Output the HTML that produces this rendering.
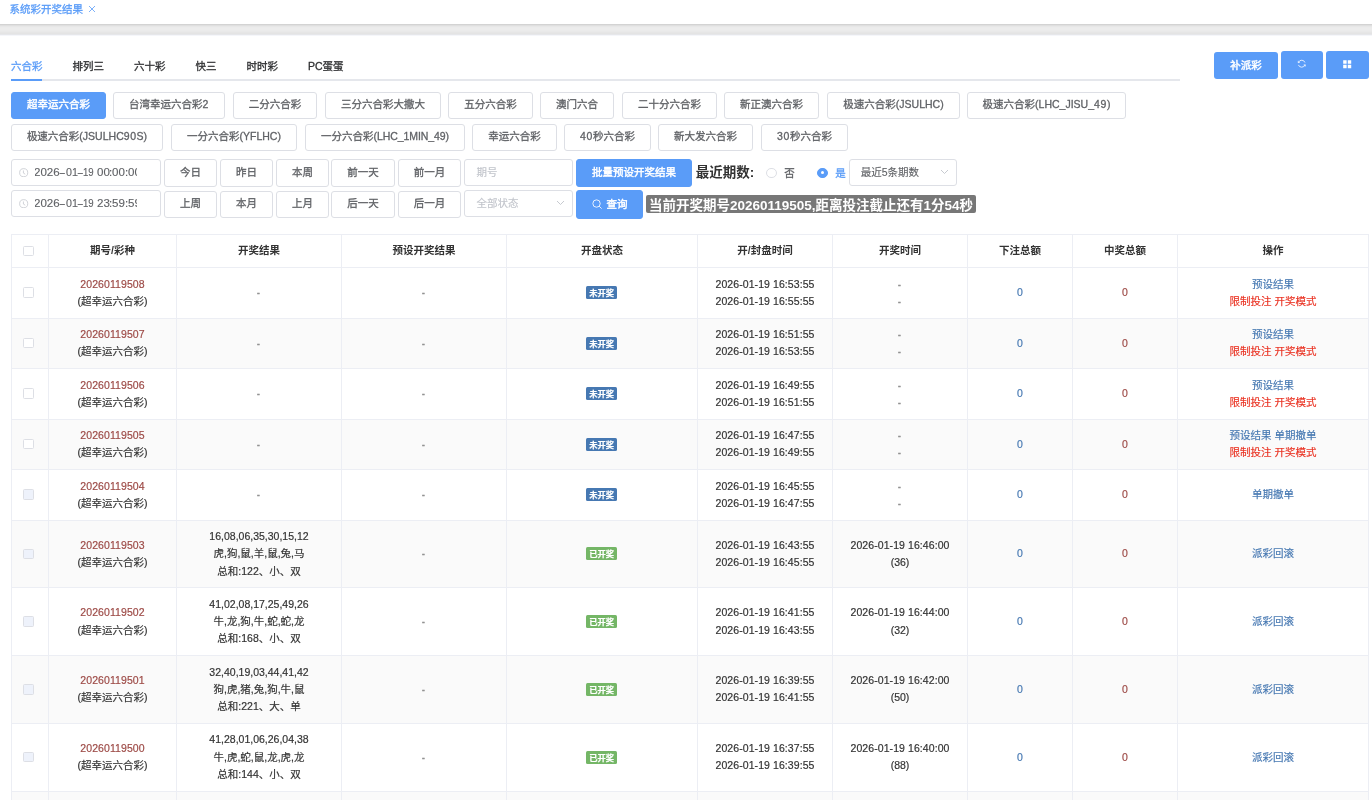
<!DOCTYPE html>
<html>
<head>
<meta charset="utf-8">
<title>系统彩开奖结果</title>
<style>
*{box-sizing:border-box}
html,body{margin:0;padding:0}
body{width:1372px;height:800px;overflow:hidden;background:#fff;position:relative;
 font-family:"Liberation Sans","Noto Sans CJK SC",sans-serif;font-size:10.5px;color:#333}
#app{position:relative;width:1372px;height:800px;overflow:hidden;background:#fff;will-change:transform}
.abs{position:absolute}
/* top tag bar */
#tagbar{left:0;top:0;width:1372px;height:24px;background:#fff}
#tagbar .t{position:absolute;left:9.6px;top:0;height:19px;line-height:19px;font-size:10.5px;color:#5a9cf8;white-space:nowrap;-webkit-text-stroke:.3px currentColor}
#tagbar .x{position:absolute;left:88.2px;top:5.2px}
#band{left:0;top:24px;width:1372px;height:12px;background:linear-gradient(#d3d3d3 0px,#d3d3d3 1px,#dfdfdf 1px,#dfdfdf 2px,#e7e7e7 2px,#e7e7e7 3px,#ebebeb 3px,#ebebeb 4px,#ececec 4px,#ececec 5px,#ececec 5px,#ececec 6px,#ebebeb 6px,#ebebeb 7px,#e9e9e9 7px,#e9e9e9 8px,#e6e6e6 8px,#e6e6e6 9px,#e4e4e4 9px,#e4e4e4 10px,#e6e7ea 10px,#e6e7ea 11px,#f5f6fa 11px,#f5f6fa 12px)}
/* tabs */
#tabs{left:11px;top:51px;width:1169px;height:30px}
#tabs .line{position:absolute;left:0;right:0;top:28px;height:2px;background:#e5e7ec}
#tabs .bar{position:absolute;left:0;top:28px;width:31px;height:2px;background:#5a9cf8}
#tabs .it{display:inline-block;height:30px;line-height:30px;padding:0 15px;font-size:10.5px;font-weight:400;-webkit-text-stroke:.3px currentColor;color:#303133;vertical-align:top}
#tabs .it.first{padding-left:0}
#tabs .it.on{color:#5a9cf8}
#lot1 .btn,#lot2 </style>
</head>
<body>
<div id="app">
<div id="tagbar" class="abs"><span class="t">系统彩开奖结果</span><svg class="x" width="8" height="8" viewBox="0 0 8 8"><path d="M1 1L7 7M7 1L1 7" stroke="#5a9cf8" stroke-width="0.8" fill="none"/></svg></div>
<div id="band" class="abs"></div>
<div id="tabs" class="abs"><div class="line"></div><div class="bar"></div><span class="it on first">六合彩</span><span class="it">排列三</span><span class="it">六十彩</span><span class="it">快三</span><span class="it">时时彩</span><span class="it">PC蛋蛋</span></div>
<style>
.rb{position:absolute;background:#5a9cf8;border-radius:3px;color:#fff;font-size:10.5px;font-weight:400;-webkit-text-stroke:.45px currentColor;text-align:center;white-space:nowrap}
.rb svg{position:absolute}
</style>
<div class="rb" style="left:1214px;top:52px;width:64px;height:27px;line-height:27px">补派彩</div>
<div class="rb" style="left:1281px;top:51px;width:42px;height:28px"><svg width="9.4" height="9.4" viewBox="0 0 10 10" style="left:15.9px;top:8.3px;transform:scaleX(-1)"><path d="M1.52 3.73A3.7 3.7 0 0 1 8.35 3.44M8.48 6.27A3.7 3.7 0 0 1 1.65 6.56" fill="none" stroke="#fff" stroke-width="0.85"/><path d="M8.65 1.94l0.3 1.9l-1.9 -0.2M1.35 8.06l-0.3 -1.9l1.9 0.2" fill="none" stroke="#fff" stroke-width="0.8"/></svg></div>
<div class="rb" style="left:1326px;top:51px;width:43px;height:28px"><svg width="8.6" height="8.6" viewBox="0 0 9 9" style="left:17.1px;top:9px"><path d="M0.2 0.2h3.6v3.6h-3.6zM5 0.2h3.6v3.6h-3.6zM0.2 5h3.6v3.6h-3.6zM5 5h3.6v3.6h-3.6z" fill="#fff"/></svg></div>
<style>
.box{position:absolute;border:1px solid #dddfe5;border-radius:3px;background:#fff;color:#606266;font-size:10.5px;font-weight:400;-webkit-text-stroke:.3px currentColor;white-space:nowrap;text-align:center;overflow:hidden}
.box.pri{background:#5a9cf8;border-color:#5a9cf8;color:#fff;-webkit-text-stroke:.45px currentColor}
.box.in{text-align:left;font-weight:400;-webkit-text-stroke:.12px currentColor}
.box .ph{position:absolute;left:11.5px;top:0;color:#c1c4cb}
.box .dt{position:absolute;left:22.5px;top:0;width:102.5px;height:25px;overflow:hidden;color:#606266}
.box .dt b{position:absolute;top:0;font-weight:400;transform-origin:0 50%;transform:scaleX(1.1)}
.box .dt b.h{transform:scaleX(1.9)}
.box .dt b.w{transform:scaleX(1.02)}
.box .dt b.n{transform:scaleX(.92)}
.box svg{position:absolute}
.lbl16{position:absolute;font-size:13.5px;font-weight:700;color:#333;white-space:nowrap}
.rad{position:absolute;width:10.5px;height:10.5px;border-radius:50%;border:1px solid #dddfe5;background:#fff}
.rad.on{border-color:#5a9cf8;background:#5a9cf8}
.rad.on:after{content:"";position:absolute;left:50%;top:50%;width:3px;height:3px;margin:-1.5px 0 0 -1.5px;border-radius:50%;background:#fff}
.rl{position:absolute;font-size:10.5px;font-weight:400;-webkit-text-stroke:.3px currentColor;color:#606266;white-space:nowrap}
.tag0{position:absolute;background:#777;color:#fff;font-weight:700;border-radius:3px;white-space:nowrap;text-align:center}
</style>
<div class="box in" style="left:11px;top:159px;width:150px;height:27px;line-height:25px"><svg width="9.4" height="9.4" viewBox="0 0 10 10" style="left:7.2px;top:7.5px"><circle cx="5" cy="5" r="4.3" fill="none" stroke="#c1c4cb" stroke-width="0.8"/><path d="M4.7 2.6V5.4L6.6 6.6" fill="none" stroke="#c1c4cb" stroke-width="0.8"/></svg><span class="dt"><b style="left:-0.5px">2026</b><b class="h" style="left:24.7px">-</b><b class="w" style="left:31.2px">01</b><b class="h" style="left:42.8px">-</b><b class="n" style="left:48.5px">19</b><b style="left:59.5px"> </b><b style="left:62.2px">00</b><b style="left:74.9px">:</b><b style="left:77.6px">00</b><b style="left:90.4px">:</b><b style="left:93.1px">00</b></span></div>
<div class="box " style="left:164px;top:159px;width:53px;height:28px;line-height:24px">今日</div>
<div class="box " style="left:220px;top:159px;width:53px;height:28px;line-height:24px">昨日</div>
<div class="box " style="left:276px;top:159px;width:53px;height:28px;line-height:24px">本周</div>
<div class="box " style="left:331px;top:159px;width:64px;height:28px;line-height:24px">前一天</div>
<div class="box " style="left:398px;top:159px;width:63px;height:28px;line-height:24px">前一月</div>
<div class="box in" style="left:464px;top:159px;width:109px;height:27px;line-height:25px"><span class="ph">期号</span></div>
<div class="box pri" style="left:576px;top:159px;width:116px;height:28px;line-height:25px">批量预设开奖结果</div>
<div class="lbl16" style="left:695.7px;top:164px;line-height:18px">最近期数:</div>
<div class="rad" style="left:766px;top:167.5px"></div><div class="rl" style="left:784.3px;top:164px;line-height:18px">否</div>
<div class="rad on" style="left:817px;top:167.5px"></div><div class="rl" style="left:835.3px;top:164px;line-height:18px;color:#5a9cf8">是</div>
<div class="box in" style="left:849px;top:159px;width:108px;height:27px;line-height:25px"><span class="ph" style="color:#606266;left:10.7px">最近5条期数</span><svg width="9" height="6" viewBox="0 0 9 6" style="left:90.2px;top:8.9px"><path d="M1 1L4.5 4.5L8 1" fill="none" stroke="#c1c4cb" stroke-width="0.9"/></svg></div>
<div class="box in" style="left:11px;top:190px;width:150px;height:27px;line-height:25px"><svg width="9.4" height="9.4" viewBox="0 0 10 10" style="left:7.2px;top:7.5px"><circle cx="5" cy="5" r="4.3" fill="none" stroke="#c1c4cb" stroke-width="0.8"/><path d="M4.7 2.6V5.4L6.6 6.6" fill="none" stroke="#c1c4cb" stroke-width="0.8"/></svg><span class="dt"><b style="left:-0.5px">2026</b><b class="h" style="left:24.7px">-</b><b class="w" style="left:31.2px">01</b><b class="h" style="left:42.8px">-</b><b class="n" style="left:48.5px">19</b><b style="left:59.5px"> </b><b style="left:62.2px">23</b><b style="left:74.9px">:</b><b style="left:77.6px">59</b><b style="left:90.4px">:</b><b style="left:93.1px">59</b></span></div>
<div class="box " style="left:164px;top:191px;width:53px;height:27px;line-height:23.4px">上周</div>
<div class="box " style="left:220px;top:191px;width:53px;height:27px;line-height:23.4px">本月</div>
<div class="box " style="left:276px;top:191px;width:53px;height:27px;line-height:23.4px">上月</div>
<div class="box " style="left:331px;top:191px;width:64px;height:27px;line-height:23.4px">后一天</div>
<div class="box " style="left:398px;top:191px;width:63px;height:27px;line-height:23.4px">后一月</div>
<div class="box in" style="left:464px;top:190px;width:109px;height:27px;line-height:25px"><span class="ph">全部状态</span><svg width="9" height="6" viewBox="0 0 9 6" style="left:90.7px;top:8.9px"><path d="M1 1L4.5 4.5L8 1" fill="none" stroke="#c1c4cb" stroke-width="0.9"/></svg></div>
<div class="box pri" style="left:576px;top:190px;width:67px;height:29px;line-height:27px"><svg width="10.4" height="10.4" viewBox="0 0 11 11" style="left:15px;top:8.3px"><circle cx="4.8" cy="4.8" r="3.9" fill="none" stroke="#fff" stroke-width="0.9"/><path d="M7.6 7.6L10.2 10.2" stroke="#fff" stroke-width="0.9"/></svg><span style="position:absolute;left:29.5px;top:0">查询</span></div>
<div class="tag0" style="left:646px;top:195px;width:330px;height:18px;line-height:21px;font-size:13.5px;overflow:hidden;border-radius:2px">当前开奖期号20260119505,距离投注截止还有1分54秒</div>
<style>.dg{letter-spacing:.6px;margin-right:-.6px;padding-right:.6px}</style>
<div class="box pri" style="left:11px;top:92px;width:95px;height:27px;line-height:23px">超幸运六合彩</div>
<div class="box " style="left:113px;top:92px;width:112px;height:27px;line-height:23px">台湾幸运六合彩<span class="dg">2</span></div>
<div class="box " style="left:233px;top:92px;width:84px;height:27px;line-height:23px">二分六合彩</div>
<div class="box " style="left:325px;top:92px;width:116px;height:27px;line-height:23px">三分六合彩大撒大</div>
<div class="box " style="left:448px;top:92px;width:85px;height:27px;line-height:23px">五分六合彩</div>
<div class="box " style="left:540px;top:92px;width:74px;height:27px;line-height:23px">澳门六合</div>
<div class="box " style="left:622px;top:92px;width:95px;height:27px;line-height:23px">二十分六合彩</div>
<div class="box " style="left:724px;top:92px;width:95px;height:27px;line-height:23px">新正澳六合彩</div>
<div class="box " style="left:827px;top:92px;width:133px;height:27px;line-height:23px">极速六合彩(JSULHC)</div>
<div class="box " style="left:967px;top:92px;width:159px;height:27px;line-height:23px">极速六合彩(LHC_JISU_<span class="dg">49</span>)</div>
<div class="box " style="left:11px;top:124px;width:152px;height:27px;line-height:23px">极速六合彩(JSULHC<span class="dg">90</span>S)</div>
<div class="box " style="left:171px;top:124px;width:126px;height:27px;line-height:23px">一分六合彩(YFLHC)</div>
<div class="box " style="left:305px;top:124px;width:160px;height:27px;line-height:23px">一分六合彩<span style="letter-spacing:-.08px">(LHC_1MIN_49)</span></div>
<div class="box " style="left:472px;top:124px;width:85px;height:27px;line-height:23px">幸运六合彩</div>
<div class="box " style="left:564px;top:124px;width:87px;height:27px;line-height:23px"><span class="dg">40</span>秒六合彩</div>
<div class="box " style="left:658px;top:124px;width:95px;height:27px;line-height:23px">新大发六合彩</div>
<div class="box " style="left:761px;top:124px;width:87px;height:27px;line-height:23px"><span class="dg">30</span>秒六合彩</div>
<style>
#tb{position:absolute;left:11px;top:234px;width:1358px;border-collapse:separate;border-spacing:0;table-layout:fixed;border-left:1px solid #eceef4;border-top:1px solid #eceef4;font-size:10.5px;color:#333}
#tb td,#tb th{border-right:1px solid #eceef4;border-bottom:1px solid #eceef4;padding:0;text-align:center;vertical-align:top;font-weight:400;overflow:hidden;white-space:nowrap}
#tb th{font-weight:700;color:#333}
#tb .l{height:17px;line-height:17px}
#tb .rel{position:relative}
#tb td{-webkit-text-stroke:.18px currentColor}
#tb .n{letter-spacing:.08px}
#tb .hy{display:inline-block;color:#8c8c8c;-webkit-text-stroke:.45px #8c8c8c;transform:translate(-.3px,-.1px) scaleX(.8)}
#tb tr.s td{background:#fafafa}
#tb .p{color:#9d4a46}
#tb .b{color:#4678b2}
#tb .r{color:#ea3323}
.cb{position:absolute;left:11px;width:11px;height:11px;border:1px solid #dddfe5;border-radius:1.5px;background:#fff}
.cb.d{background:#eef2fb}
.lb{-webkit-text-stroke:.2px #fff;position:absolute;left:79px;width:31px;height:13px;line-height:15.4px;overflow:hidden;font-size:8.25px;font-weight:700;color:#fff;border-radius:1.5px;text-align:center;white-space:nowrap}
.lb.u{background:#4678b2}
.lb.o{background:#74b666}
</style>
<table id="tb"><colgroup><col style="width:37px"><col style="width:128px"><col style="width:165px"><col style="width:165px"><col style="width:191px"><col style="width:135px"><col style="width:135px"><col style="width:105px"><col style="width:105px"><col style="width:191px"></colgroup>
<tr style="height:33px"><th class="rel"><span class="cb" style="top:11px;height:10px"></span></th><th><div class="l" style="margin-top:7px">期号/彩种</div></th><th><div class="l" style="margin-top:7px">开奖结果</div></th><th><div class="l" style="margin-top:7px">预设开奖结果</div></th><th><div class="l" style="margin-top:7px">开盘状态</div></th><th><div class="l" style="margin-top:7px">开/封盘时间</div></th><th><div class="l" style="margin-top:7px">开奖时间</div></th><th><div class="l" style="margin-top:7px">下注总额</div></th><th><div class="l" style="margin-top:7px">中奖总额</div></th><th><div class="l" style="margin-top:7px">操作</div></th></tr>
<tr style="height:51px"><td class="rel"><span class="cb" style="top:19px"></span></td><td><div class="l" style="margin-top:8px"><span class="p n">20260119508</span></div><div class="l">(超幸运六合彩)</div></td><td><div class="l" style="margin-top:16px"><span class="hy">-</span></div></td><td><div class="l" style="margin-top:16px"><span class="hy">-</span></div></td><td class="rel"><span class="lb u" style="top:18px">未开奖</span></td><td><div class="l" style="margin-top:8px"><span class="n">2026-01-19 16:53:55</span></div><div class="l"><span class="n">2026-01-19 16:55:55</span></div></td><td><div class="l" style="margin-top:8px"><span class="hy">-</span></div><div class="l"><span class="hy">-</span></div></td><td><div class="l" style="margin-top:16px"><span class="b">0</span></div></td><td><div class="l" style="margin-top:16px"><span class="p">0</span></div></td><td><div class="l" style="margin-top:8px"><span class="b">预设结果</span></div><div class="l"><span class="r">限制投注 开奖模式</span></div></td></tr>
<tr class="s" style="height:50px"><td class="rel"><span class="cb" style="top:19px;height:10px"></span></td><td><div class="l" style="margin-top:7px"><span class="p n">20260119507</span></div><div class="l">(超幸运六合彩)</div></td><td><div class="l" style="margin-top:16px"><span class="hy">-</span></div></td><td><div class="l" style="margin-top:16px"><span class="hy">-</span></div></td><td class="rel"><span class="lb u" style="top:18px">未开奖</span></td><td><div class="l" style="margin-top:7px"><span class="n">2026-01-19 16:51:55</span></div><div class="l"><span class="n">2026-01-19 16:53:55</span></div></td><td><div class="l" style="margin-top:7px"><span class="hy">-</span></div><div class="l"><span class="hy">-</span></div></td><td><div class="l" style="margin-top:16px"><span class="b">0</span></div></td><td><div class="l" style="margin-top:16px"><span class="p">0</span></div></td><td><div class="l" style="margin-top:7px"><span class="b">预设结果</span></div><div class="l"><span class="r">限制投注 开奖模式</span></div></td></tr>
<tr style="height:51px"><td class="rel"><span class="cb" style="top:19px"></span></td><td><div class="l" style="margin-top:8px"><span class="p n">20260119506</span></div><div class="l">(超幸运六合彩)</div></td><td><div class="l" style="margin-top:16px"><span class="hy">-</span></div></td><td><div class="l" style="margin-top:16px"><span class="hy">-</span></div></td><td class="rel"><span class="lb u" style="top:18px">未开奖</span></td><td><div class="l" style="margin-top:8px"><span class="n">2026-01-19 16:49:55</span></div><div class="l"><span class="n">2026-01-19 16:51:55</span></div></td><td><div class="l" style="margin-top:8px"><span class="hy">-</span></div><div class="l"><span class="hy">-</span></div></td><td><div class="l" style="margin-top:16px"><span class="b">0</span></div></td><td><div class="l" style="margin-top:16px"><span class="p">0</span></div></td><td><div class="l" style="margin-top:8px"><span class="b">预设结果</span></div><div class="l"><span class="r">限制投注 开奖模式</span></div></td></tr>
<tr class="s" style="height:50px"><td class="rel"><span class="cb" style="top:19px;height:10px"></span></td><td><div class="l" style="margin-top:7px"><span class="p n">20260119505</span></div><div class="l">(超幸运六合彩)</div></td><td><div class="l" style="margin-top:16px"><span class="hy">-</span></div></td><td><div class="l" style="margin-top:16px"><span class="hy">-</span></div></td><td class="rel"><span class="lb u" style="top:18px">未开奖</span></td><td><div class="l" style="margin-top:7px"><span class="n">2026-01-19 16:47:55</span></div><div class="l"><span class="n">2026-01-19 16:49:55</span></div></td><td><div class="l" style="margin-top:7px"><span class="hy">-</span></div><div class="l"><span class="hy">-</span></div></td><td><div class="l" style="margin-top:16px"><span class="b">0</span></div></td><td><div class="l" style="margin-top:16px"><span class="p">0</span></div></td><td><div class="l" style="margin-top:7px"><span class="b">预设结果 单期撤单</span></div><div class="l"><span class="r">限制投注 开奖模式</span></div></td></tr>
<tr style="height:51px"><td class="rel"><span class="cb d" style="top:19px"></span></td><td><div class="l" style="margin-top:8px"><span class="p n">20260119504</span></div><div class="l">(超幸运六合彩)</div></td><td><div class="l" style="margin-top:16px"><span class="hy">-</span></div></td><td><div class="l" style="margin-top:16px"><span class="hy">-</span></div></td><td class="rel"><span class="lb u" style="top:18px">未开奖</span></td><td><div class="l" style="margin-top:8px"><span class="n">2026-01-19 16:45:55</span></div><div class="l"><span class="n">2026-01-19 16:47:55</span></div></td><td><div class="l" style="margin-top:8px"><span class="hy">-</span></div><div class="l"><span class="hy">-</span></div></td><td><div class="l" style="margin-top:16px"><span class="b">0</span></div></td><td><div class="l" style="margin-top:16px"><span class="p">0</span></div></td><td><div class="l" style="margin-top:16px"><span class="b">单期撤单</span></div></td></tr>
<tr class="s" style="height:67px"><td class="rel"><span class="cb d" style="top:28px;height:10px"></span></td><td><div class="l" style="margin-top:16px"><span class="p n">20260119503</span></div><div class="l">(超幸运六合彩)</div></td><td><div class="l" style="margin-top:7px">16,08,06,35,30,15,12</div><div class="l">虎,狗,鼠,羊,鼠,兔,马</div><div class="l" style="margin-top:1px">总和:122、小、双</div></td><td><div class="l" style="margin-top:24px"><span class="hy">-</span></div></td><td class="rel"><span class="lb o" style="top:26px">已开奖</span></td><td><div class="l" style="margin-top:16px"><span class="n">2026-01-19 16:43:55</span></div><div class="l"><span class="n">2026-01-19 16:45:55</span></div></td><td><div class="l" style="margin-top:16px"><span class="n">2026-01-19 16:46:00</span></div><div class="l">(36)</div></td><td><div class="l" style="margin-top:24px"><span class="b">0</span></div></td><td><div class="l" style="margin-top:24px"><span class="p">0</span></div></td><td><div class="l" style="margin-top:24px"><span class="b">派彩回滚</span></div></td></tr>
<tr style="height:68px"><td class="rel"><span class="cb d" style="top:28px"></span></td><td><div class="l" style="margin-top:16px"><span class="p n">20260119502</span></div><div class="l" style="margin-top:1px">(超幸运六合彩)</div></td><td><div class="l" style="margin-top:8px">41,02,08,17,25,49,26</div><div class="l">牛,龙,狗,牛,蛇,蛇,龙</div><div class="l">总和:168、小、双</div></td><td><div class="l" style="margin-top:25px"><span class="hy">-</span></div></td><td class="rel"><span class="lb o" style="top:27px">已开奖</span></td><td><div class="l" style="margin-top:16px"><span class="n">2026-01-19 16:41:55</span></div><div class="l" style="margin-top:1px"><span class="n">2026-01-19 16:43:55</span></div></td><td><div class="l" style="margin-top:16px"><span class="n">2026-01-19 16:44:00</span></div><div class="l" style="margin-top:1px">(32)</div></td><td><div class="l" style="margin-top:25px"><span class="b">0</span></div></td><td><div class="l" style="margin-top:25px"><span class="p">0</span></div></td><td><div class="l" style="margin-top:25px"><span class="b">派彩回滚</span></div></td></tr>
<tr class="s" style="height:68px"><td class="rel"><span class="cb d" style="top:28px"></span></td><td><div class="l" style="margin-top:16px"><span class="p n">20260119501</span></div><div class="l">(超幸运六合彩)</div></td><td><div class="l" style="margin-top:8px">32,40,19,03,44,41,42</div><div class="l">狗,虎,猪,兔,狗,牛,鼠</div><div class="l">总和:221、大、单</div></td><td><div class="l" style="margin-top:25px"><span class="hy">-</span></div></td><td class="rel"><span class="lb o" style="top:27px">已开奖</span></td><td><div class="l" style="margin-top:16px"><span class="n">2026-01-19 16:39:55</span></div><div class="l"><span class="n">2026-01-19 16:41:55</span></div></td><td><div class="l" style="margin-top:16px"><span class="n">2026-01-19 16:42:00</span></div><div class="l">(50)</div></td><td><div class="l" style="margin-top:25px"><span class="b">0</span></div></td><td><div class="l" style="margin-top:25px"><span class="p">0</span></div></td><td><div class="l" style="margin-top:25px"><span class="b">派彩回滚</span></div></td></tr>
<tr style="height:68px"><td class="rel"><span class="cb d" style="top:28px;height:10px"></span></td><td><div class="l" style="margin-top:16px"><span class="p n">20260119500</span></div><div class="l">(超幸运六合彩)</div></td><td><div class="l" style="margin-top:7px">41,28,01,06,26,04,38</div><div class="l" style="margin-top:1px">牛,虎,蛇,鼠,龙,虎,龙</div><div class="l">总和:144、小、双</div></td><td><div class="l" style="margin-top:25px"><span class="hy">-</span></div></td><td class="rel"><span class="lb o" style="top:27px">已开奖</span></td><td><div class="l" style="margin-top:16px"><span class="n">2026-01-19 16:37:55</span></div><div class="l"><span class="n">2026-01-19 16:39:55</span></div></td><td><div class="l" style="margin-top:16px"><span class="n">2026-01-19 16:40:00</span></div><div class="l">(88)</div></td><td><div class="l" style="margin-top:25px"><span class="b">0</span></div></td><td><div class="l" style="margin-top:25px"><span class="p">0</span></div></td><td><div class="l" style="margin-top:25px"><span class="b">派彩回滚</span></div></td></tr>
<tr class="s" style="height:68px"><td></td><td></td><td></td><td></td><td></td><td></td><td></td><td></td><td></td><td></td></tr>
</table>
</div>
</body>
</html>
